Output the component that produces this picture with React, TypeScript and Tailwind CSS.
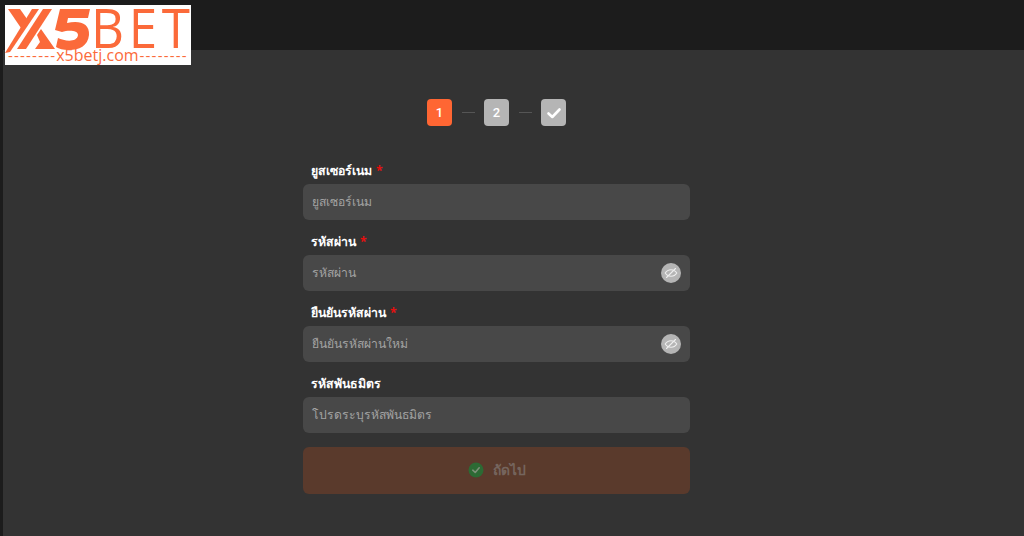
import React from "react";

function EyeOff() {
  return (
    <div className="absolute right-[9px] top-1/2 -translate-y-1/2 flex h-5 w-5 items-center justify-center rounded-full bg-[#b5b5b5]">
      <svg width="14" height="14" viewBox="0 0 14 14" fill="none" stroke="#eeeeee" strokeWidth="1.1" strokeLinecap="round">
        <path d="M1.2 7C2.6 4.8 4.6 3.7 7 3.7S11.4 4.8 12.8 7C11.4 9.2 9.4 10.3 7 10.3S2.6 9.2 1.2 7Z" />
        <path d="M2.5 11.5 11.5 2.5" />
      </svg>
    </div>
  );
}

function Field({ label, required, placeholder, eye, mb }: { label: string; required?: boolean; placeholder: string; eye?: boolean; mb: string }) {
  return (
    <div className={mb}>
      <div className="h-[21px] pl-[8px] text-[12.3px] leading-[16px] font-bold text-white">
        {label}
        {required && <span className="ml-[4px] text-[#e60f0f]">*</span>}
      </div>
      <div className="relative flex h-[36px] items-center rounded-[6px] bg-[#484848] pl-[9px] text-[12.2px] text-[#a3a3a3]">
        {placeholder}
        {eye && <EyeOff />}
      </div>
    </div>
  );
}

function Step({ active, children }: { active?: boolean; children: React.ReactNode }) {
  return (
    <div className={`flex h-[27px] w-[25px] items-center justify-center rounded-[4px] font-['Roboto',sans-serif] text-[13px] font-medium text-white ${active ? "bg-[#ff6633]" : "bg-[#b5b5b5]"}`}>
      {children}
    </div>
  );
}

export default function App() {
  return (
    <div className="relative h-[536px] w-[1024px] overflow-hidden bg-[#1c1c1c] font-['Noto_Sans','Liberation_Sans',sans-serif]">
      <div className="absolute left-[5px] top-[5px] h-[60px] w-[186px] bg-white">
        <svg className="absolute left-0 top-0" width="90" height="48" viewBox="0 0 90 48" fill="#fb6a3a">
          <path d="M3 4h12l7 10-6 9Z" />
          <path d="M0 48 27 4h7L5 47Z" />
          <path d="M12 44 38 4h9L21 44Z" />
          <path d="M32 30l4-6 14 20H30l5-7Z" />
          <path d="M55 4h30l-2 9H63l-1 5c12-3 23 0 22 12-1 11-10 15-20 15-6 0-10-1-13-3l2-9c6 3 19 5 20-3 0-5-10-5-16-3l-7-2Z" />
        </svg>
        <div className="absolute left-[86px] top-[2px] origin-left text-[55px] leading-[40px] tracking-[5px] text-[#fb6a3a] font-['Open_Sans',sans-serif] [transform:scaleX(0.93)]">BET</div>
        <div className="absolute left-[3px] top-[43px] whitespace-nowrap text-[15px] leading-[14px] text-[#fb6a3a] font-['Open_Sans',sans-serif]">
          <span className="tracking-[1.2px]">--------</span>
          <span className="text-[16px]">x5betj.com</span>
          <span className="ml-[1px] tracking-[1.2px]">--------</span>
        </div>
      </div>
      <div className="h-[50px]" />
      <div className="ml-[3px] h-[486px] bg-[#333333] pt-[49px]">
        <div className="ml-[300px] w-[387px]">
          <div className="mb-[33px] flex items-center justify-center gap-[9.5px]">
            <Step active>1</Step>
            <div className="h-px w-[13px] bg-[#555555]" />
            <Step>2</Step>
            <div className="h-px w-[13px] bg-[#555555]" />
            <Step>
              <svg width="16" height="16" viewBox="0 0 16 16" fill="none" stroke="#ffffff" strokeWidth="2.6" strokeLinecap="round" strokeLinejoin="round">
                <path d="M2.5 8.5 6.3 12 13.5 4.5" />
              </svg>
            </Step>
          </div>
          <div className="pt-[4px]">
            <Field label="ยูสเซอร์เนม" required placeholder="ยูสเซอร์เนม" mb="mb-[14px]" />
            <Field label="รหัสผ่าน" required placeholder="รหัสผ่าน" eye mb="mb-[14px]" />
            <Field label="ยืนยันรหัสผ่าน" required placeholder="ยืนยันรหัสผ่านใหม่" eye mb="mb-[14px]" />
            <Field label="รหัสพันธมิตร" placeholder="โปรดระบุรหัสพันธมิตร" mb="mb-[14px]" />
            <div className="flex h-[47px] items-center justify-center gap-[9px] rounded-[6px] bg-[#5a3a2c] pb-[1px] text-[13.8px] font-bold text-[#75655e]">
              <svg width="16" height="16" viewBox="0 0 16 16">
                <circle cx="8" cy="8" r="7.5" fill="#2c6a34" />
                <path d="M4.8 8.2 7.2 10.5 11.2 5.8" fill="none" stroke="#7d8f78" strokeWidth="1.6" strokeLinecap="round" strokeLinejoin="round" />
              </svg>
              ถัดไป
            </div>
          </div>
        </div>
      </div>
    </div>
  );
}
